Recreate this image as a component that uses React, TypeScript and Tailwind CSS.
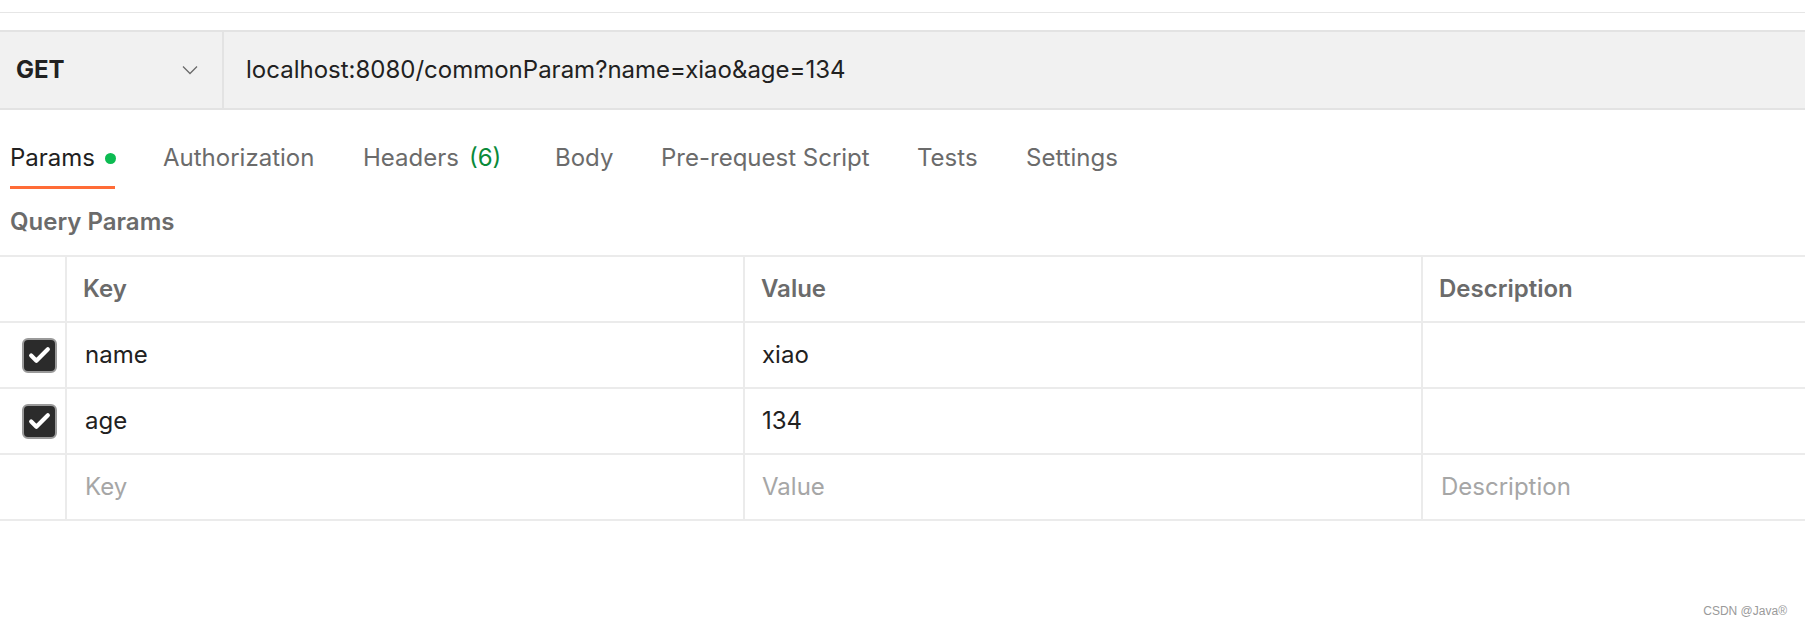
import { Check } from 'lucide-react'

const tabs = [
  { label: 'Authorization', start: 163 },
  { label: 'Headers', start: 363, count: '(6)' },
  { label: 'Body', start: 555 },
  { label: 'Pre-request Script', start: 661 },
  { label: 'Tests', start: 917 },
  { label: 'Settings', start: 1026 },
]

const rows = [
  { key: 'name', value: 'xiao' },
  { key: 'age', value: '134' },
]

function Checkbox() {
  return (
    <div className="flex h-[35px] w-[35px] items-center justify-center rounded-[6px] border-2 border-[#9a9a9a] bg-[#2b2b2b]">
      <Check className="h-[25px] w-[25px] text-white" strokeWidth={4} />
    </div>
  )
}

export default function App() {
  return (
    <div className="relative h-[626px] w-[1805px] overflow-hidden bg-white font-['Inter',sans-serif] text-[#212121]">
      <div className="h-[12px]" />
      <div className="h-[1px] bg-[#e6e6e6]" />
      <div className="h-[17px]" />

      {/* request bar */}
      <div className="flex h-[80px] border-y-2 border-[#e3e3e3] bg-[#f1f1f1]">
        <div className="flex w-[224px] items-center justify-between border-r-2 border-[#e3e3e3] pl-[16px] pr-[24px]">
          <span className="text-[24px] font-bold text-[#212121]">GET</span>
          <svg width="16" height="10" viewBox="0 0 16 10" fill="none">
            <path d="M1 1.5 8 8.5 15 1.5" stroke="#6b6b6b" strokeWidth="1.3" />
          </svg>
        </div>
        <div className="flex items-center pl-[22px] text-[24px]">
          localhost:8080/commonParam?name=xiao&amp;age=134
        </div>
      </div>

      {/* tabs */}
      <div className="relative h-[79px] text-[24px] text-[#6b6b6b]">
        <div className="absolute left-[10px] top-[30px] flex items-center gap-[10px] text-[#212121]">
          Params
          <span className="h-[11px] w-[11px] rounded-full bg-[#0cbb52]" />
        </div>
        <div className="absolute bottom-0 left-[10px] h-[3px] w-[105px] bg-[#ff6c37]" />
        {tabs.map((t) => (
          <div key={t.label} className="absolute top-[30px]" style={{ left: t.start }}>
            {t.label}
            {t.count && <span className="ml-[10px] text-[#0a8a3a]">{t.count}</span>}
          </div>
        ))}
      </div>

      <div className="flex h-[66px] items-center pl-[10px] text-[24px] font-semibold text-[#6b6b6b]">
        Query Params
      </div>

      {/* params table */}
      <div className="grid grid-cols-[67px_678px_678px_1fr] border-t-2 border-[#ebebeb] text-[24px]">
        <div className="h-[66px] border-b-2 border-r-2 border-[#ebebeb]" />
        <div className="flex h-[66px] items-center border-b-2 border-r-2 border-[#ebebeb] px-[16px] font-semibold text-[#6b6b6b]">Key</div>
        <div className="flex h-[66px] items-center border-b-2 border-r-2 border-[#ebebeb] px-[16px] font-semibold text-[#6b6b6b]">Value</div>
        <div className="flex h-[66px] items-center border-b-2 border-[#ebebeb] px-[16px] font-semibold text-[#6b6b6b]">Description</div>

        {rows.map((r) => (
          <div key={r.key} className="contents">
            <div className="flex h-[66px] items-center border-b-2 border-r-2 border-[#ebebeb] pl-[22px]">
              <Checkbox />
            </div>
            <div className="flex h-[66px] items-center border-b-2 border-r-2 border-[#ebebeb] px-[18px]">{r.key}</div>
            <div className="flex h-[66px] items-center border-b-2 border-r-2 border-[#ebebeb] px-[17px]">{r.value}</div>
            <div className="h-[66px] border-b-2 border-[#ebebeb]" />
          </div>
        ))}

        <div className="h-[66px] border-b-2 border-r-2 border-[#ebebeb]" />
        <div className="flex h-[66px] items-center border-b-2 border-r-2 border-[#ebebeb] px-[18px] text-[#a6a6a6]">Key</div>
        <div className="flex h-[66px] items-center border-b-2 border-r-2 border-[#ebebeb] px-[17px] text-[#a6a6a6]">Value</div>
        <div className="flex h-[66px] items-center border-b-2 border-[#ebebeb] px-[18px] text-[#a6a6a6]">Description</div>
      </div>

      <div className="absolute bottom-[6px] right-[18px] font-['Liberation_Sans',sans-serif] text-[12px] text-[#9a9a9a]">
        CSDN @Java®
      </div>
    </div>
  )
}
